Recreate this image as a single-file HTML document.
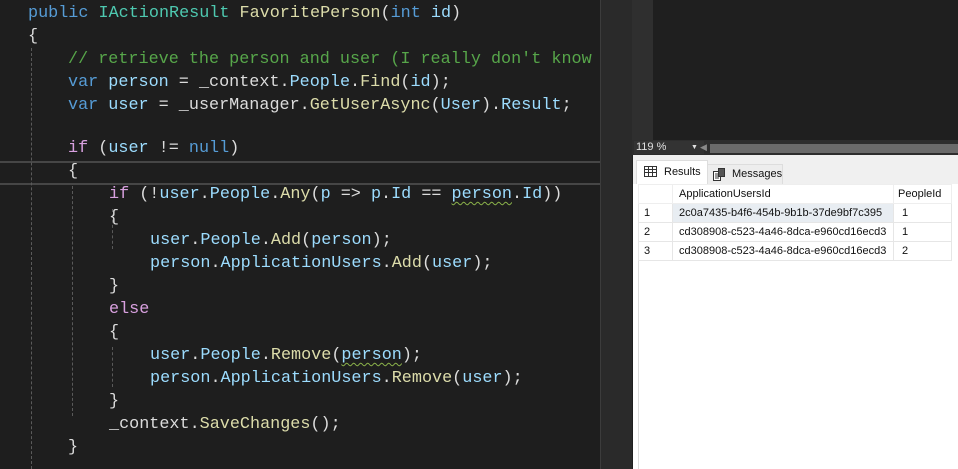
<!DOCTYPE html>
<html><head><style>
body{margin:0;width:958px;height:469px;background:#1e1e1e;overflow:hidden;position:relative;font-family:"Liberation Sans",sans-serif}
#code{position:absolute;left:0;top:0;width:600px;height:469px;background:#1e1e1e;overflow:hidden}
.l{position:absolute;left:0;white-space:pre;font-family:"Liberation Mono",monospace;font-size:16.8px;color:#dcdcdc;line-height:23px}
.k{color:#569cd6}.t{color:#4ec9b0}.m{color:#dcdcaa}.v{color:#9cdcfe}.c{color:#57a64a}.p{color:#d8a0df}
.sq{text-decoration:underline wavy #8bb34a;text-underline-offset:3px;text-decoration-thickness:1px}
.g{position:absolute;width:0;border-left:1px dashed #5a5a5a}
.cur{position:absolute;left:0;width:600px;top:161px;height:20px;border-top:2px solid #464646;border-bottom:2px solid #464646}
</style></head><body>
<div id="code">
<div class="cur"></div>
<div class="g" style="left:31px;top:48px;height:421px"></div>
<div class="g" style="left:72px;top:186px;height:230px"></div>
<div class="g" style="left:112px;top:209px;height:40px"></div>
<div class="g" style="left:112px;top:347px;height:40px"></div>
<div class="l" style="top:2px;left:28px"><span class="k">public</span> <span class="t">IActionResult</span> <span class="m">FavoritePerson</span>(<span class="k">int</span> <span class="v">id</span>)</div>
<div class="l" style="top:25px;left:28px">{</div>
<div class="l" style="top:48px;left:68px"><span class="c">// retrieve the person and user (I really don't know</span></div>
<div class="l" style="top:71px;left:68px"><span class="k">var</span> <span class="v">person</span> = _context.<span class="v">People</span>.<span class="m">Find</span>(<span class="v">id</span>);</div>
<div class="l" style="top:94px;left:68px"><span class="k">var</span> <span class="v">user</span> = _userManager.<span class="m">GetUserAsync</span>(<span class="v">User</span>).<span class="v">Result</span>;</div>
<div class="l" style="top:137px;left:68px"><span class="p">if</span> (<span class="v">user</span> != <span class="k">null</span>)</div>
<div class="l" style="top:160px;left:68px">{</div>
<div class="l" style="top:183px;left:109px"><span class="p">if</span> (!<span class="v">user</span>.<span class="v">People</span>.<span class="m">Any</span>(<span class="v">p</span> =&gt; <span class="v">p</span>.<span class="v">Id</span> == <span class="v sq">person</span>.<span class="v">Id</span>))</div>
<div class="l" style="top:206px;left:109px">{</div>
<div class="l" style="top:229px;left:150px"><span class="v">user</span>.<span class="v">People</span>.<span class="m">Add</span>(<span class="v">person</span>);</div>
<div class="l" style="top:252px;left:150px"><span class="v">person</span>.<span class="v">ApplicationUsers</span>.<span class="m">Add</span>(<span class="v">user</span>);</div>
<div class="l" style="top:275px;left:109px">}</div>
<div class="l" style="top:298px;left:109px"><span class="p">else</span></div>
<div class="l" style="top:321px;left:109px">{</div>
<div class="l" style="top:344px;left:150px"><span class="v">user</span>.<span class="v">People</span>.<span class="m">Remove</span>(<span class="v sq">person</span>);</div>
<div class="l" style="top:367px;left:150px"><span class="v">person</span>.<span class="v">ApplicationUsers</span>.<span class="m">Remove</span>(<span class="v">user</span>);</div>
<div class="l" style="top:390px;left:109px">}</div>
<div class="l" style="top:413px;left:109px">_context.<span class="m">SaveChanges</span>();</div>
<div class="l" style="top:436px;left:68px">}</div>
</div>
<div style="position:absolute;left:600px;top:0;width:1px;height:469px;background:#3c3c3c"></div>
<div style="position:absolute;left:601px;top:0;width:31px;height:469px;background:#2a2a2a"></div>
<div style="position:absolute;left:632px;top:0;width:326px;height:469px;background:#1f1f1f"></div>
<div style="position:absolute;left:632px;top:0;width:21px;height:140px;background:#2f2f2f"></div>
<!-- zoom bar -->
<div style="position:absolute;left:632px;top:140px;width:326px;height:15px;background:#2d2d2d"></div>
<div style="position:absolute;left:634px;top:141px;width:68px;height:13px;background:#333;color:#e0e0e0;font-size:11px;line-height:13px;padding-left:2px">119 %<span style="position:absolute;left:57px;top:0;font-size:7px">▼</span></div>
<div style="position:absolute;left:700px;top:141px;color:#888;font-size:9px;line-height:13px">◀</div>
<div style="position:absolute;left:710px;top:144px;width:248px;height:9px;background:#6a6a6a"></div>
<!-- results -->
<div style="position:absolute;left:633px;top:155px;width:325px;height:314px;background:#fff"></div>
<div style="position:absolute;left:633px;top:155px;width:325px;height:29px;background:#f0f0f0"></div>
<div style="position:absolute;left:636px;top:160px;width:72px;height:24px;background:#fff;border:1px solid #ddd;border-bottom:none;font-size:11px;color:#111;line-height:22px;box-sizing:border-box;padding-left:27px">Results
<svg style="position:absolute;left:7px;top:5px" width="13" height="11"><rect x=".5" y=".5" width="12" height="10" fill="none" stroke="#333"/><path d="M0 3.5H13M0 6.5H13M4.5 0V11M8.5 0V11" stroke="#333"/></svg></div>
<div style="position:absolute;left:707px;top:164px;width:76px;height:20px;background:#ededed;border:1px solid #ddd;border-bottom:none;font-size:11px;color:#111;line-height:19px;box-sizing:border-box;padding-left:24px">Messages
<svg style="position:absolute;left:4px;top:3px" width="14" height="13"><rect x="1.5" y="3.5" width="7" height="9" fill="#fff" stroke="#333"/><rect x="6.5" y=".5" width="6" height="8" fill="#555" stroke="#333"/><path d="M3 6H7M3 8H7M3 10H7" stroke="#333"/></svg></div>
<div style="position:absolute;left:638px;top:184px;width:320px;height:285px;background:#fff;border-left:1px solid #ddd"></div>
<div style="position:absolute;left:638px;top:184px;font-size:11px;color:#111">
<table style="border-collapse:collapse;font-size:11px;font-family:'Liberation Sans',sans-serif">
<tr style="height:19px;background:#fff"><td style="width:31px;border:1px solid #eee"></td><td style="width:213px;padding-left:6px;border:1px solid #eee">ApplicationUsersId</td><td style="width:52px;padding-left:4px;border:1px solid #eee">PeopleId</td></tr>
<tr style="height:19px"><td style="padding-left:5px;border:1px solid #e6e6e6">1</td><td style="padding-left:6px;border:1px dotted #333;background:#e8edf2">2c0a7435-b4f6-454b-9b1b-37de9bf7c395</td><td style="padding-left:8px;border:1px solid #e6e6e6">1</td></tr>
<tr style="height:19px"><td style="padding-left:5px;border:1px solid #e6e6e6">2</td><td style="padding-left:6px;border:1px solid #e6e6e6">cd308908-c523-4a46-8dca-e960cd16ecd3</td><td style="padding-left:8px;border:1px solid #e6e6e6">1</td></tr>
<tr style="height:19px"><td style="padding-left:5px;border:1px solid #e6e6e6">3</td><td style="padding-left:6px;border:1px solid #e6e6e6">cd308908-c523-4a46-8dca-e960cd16ecd3</td><td style="padding-left:8px;border:1px solid #e6e6e6">2</td></tr>
</table></div>
</body></html>
